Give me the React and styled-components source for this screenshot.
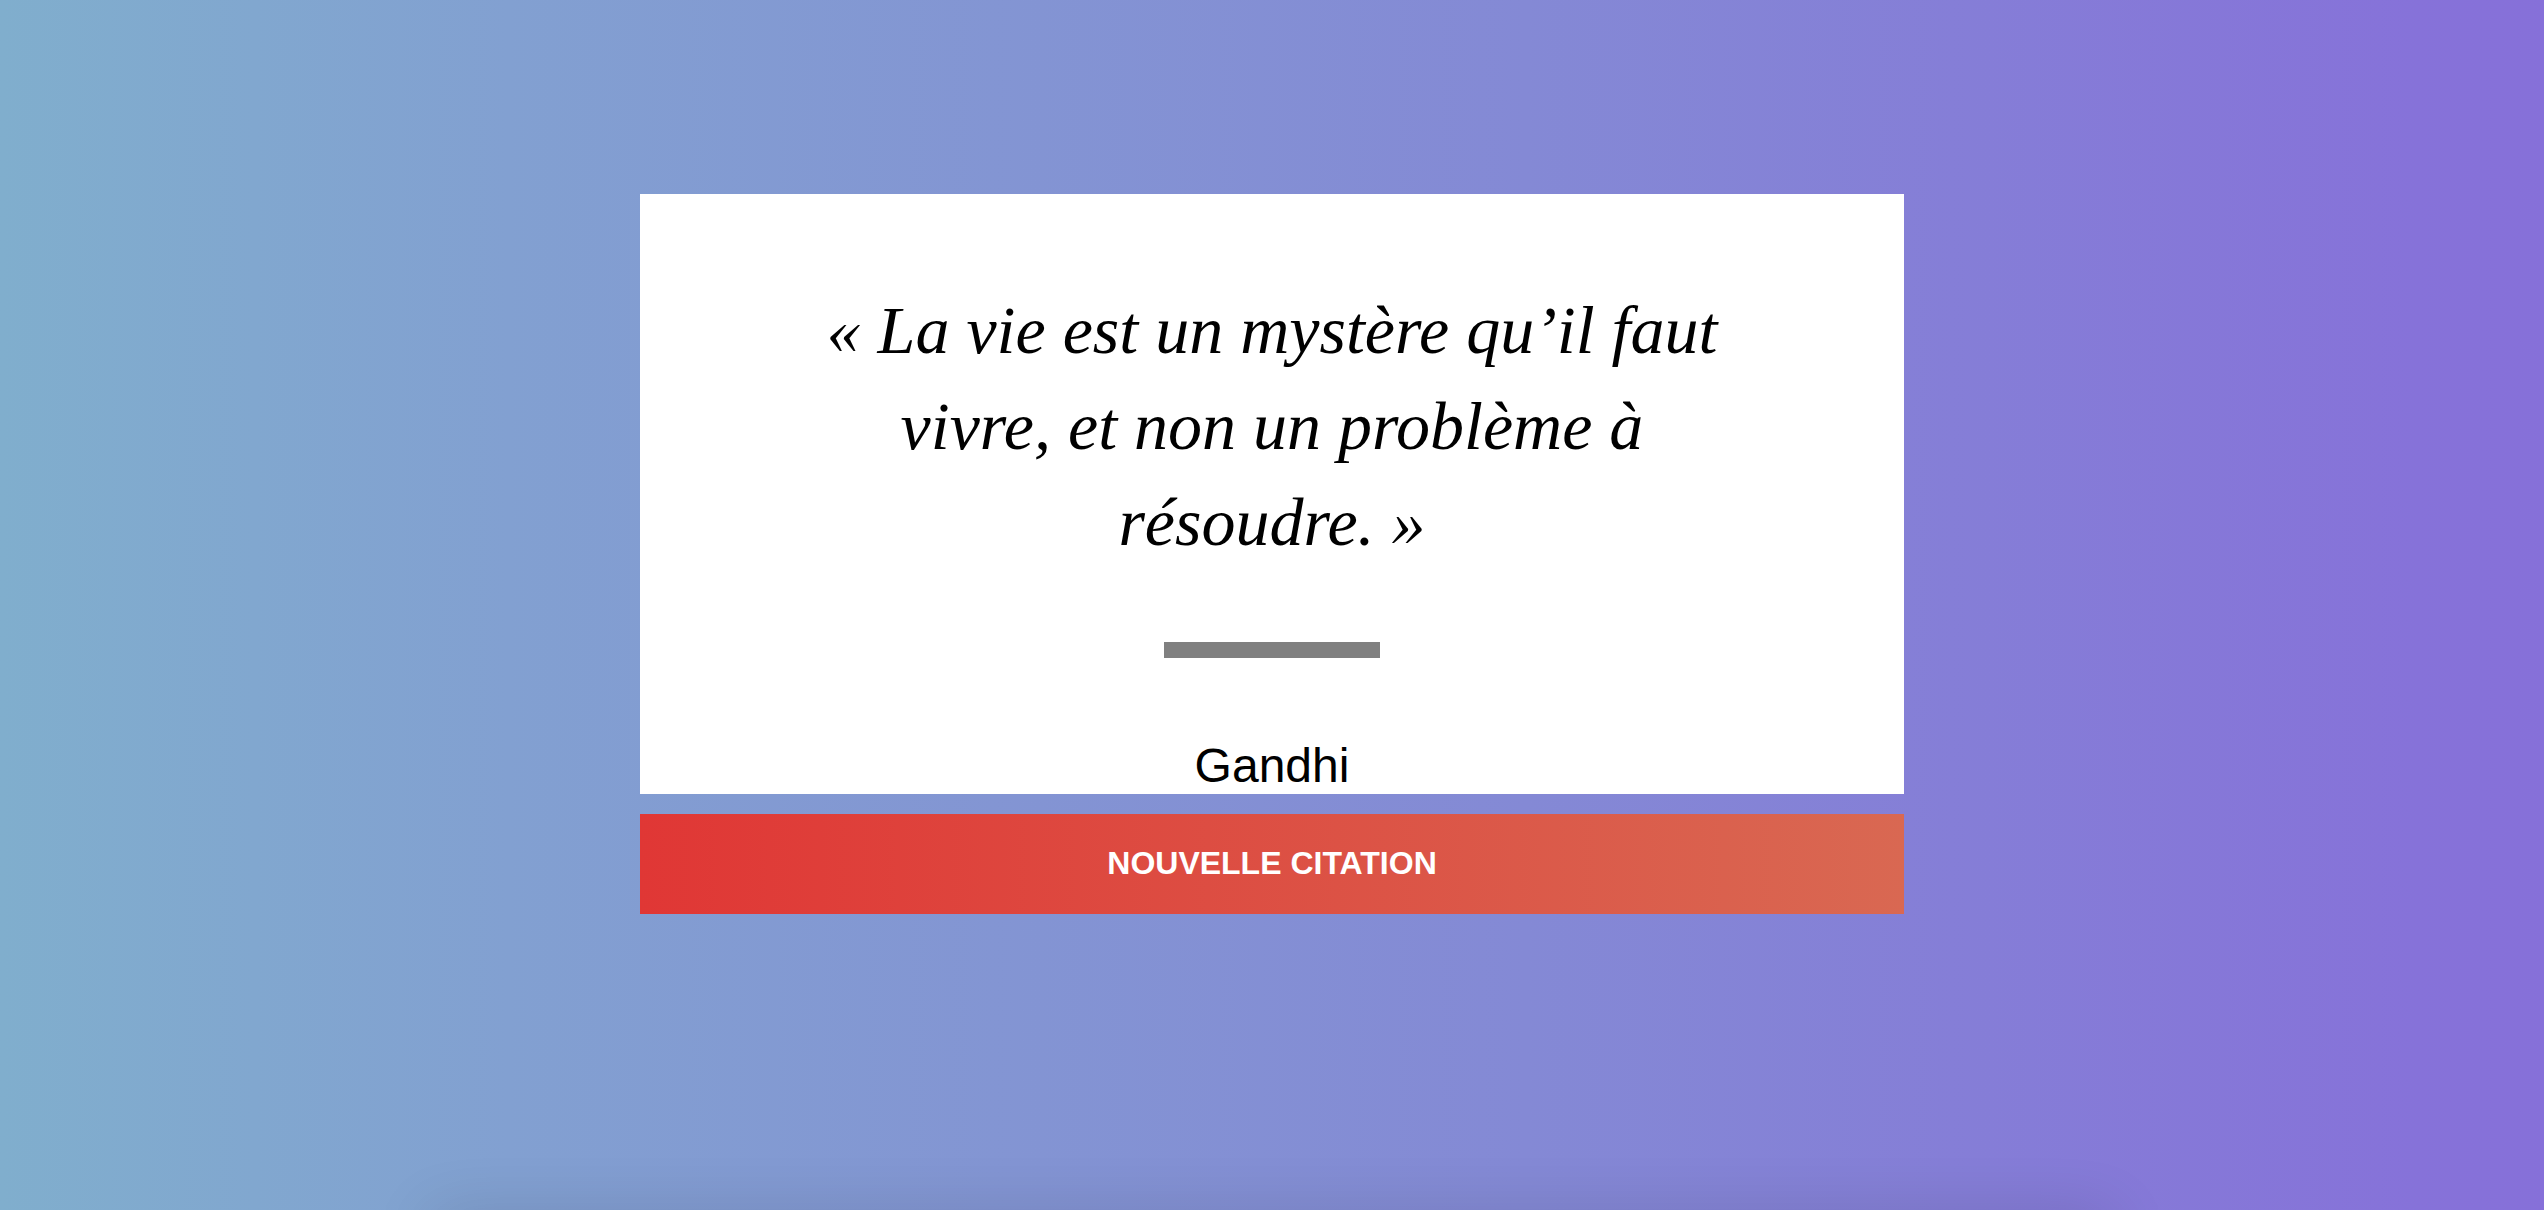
import React from 'react';
import styled, { createGlobalStyle } from 'styled-components';

const GlobalStyle = createGlobalStyle`
  * { box-sizing: border-box; }
  body {
    margin: 0;
    font-family: "Liberation Sans", Arial, sans-serif;
  }
`;

const Page = styled.main`
  position: relative;
  min-height: 100vh;
  padding: 194px 0;
  overflow: hidden;
  background: linear-gradient(to right, #80aecd 0%, #82a0d1 20%, #8489d5 60%, #8672d9 95%, #8670d9 100%);
`;

const Shade = styled.div`
  position: absolute;
  bottom: -40px;
  left: 17%;
  right: 17%;
  height: 30px;
  box-shadow: 0 0 64px rgba(0, 0, 0, 0.2);
`;

const Column = styled.div`
  display: flex;
  flex-direction: column;
  gap: 20px;
  width: 50%;
  max-width: 1264px;
  min-width: 320px;
  margin: 0 auto;
`;

const Card = styled.figure`
  display: flex;
  flex-direction: column;
  align-items: center;
  margin: 0;
  padding: 88px 160px 0;
  background: #fff;
  color: #000;
  text-align: center;
`;

const Quote = styled.blockquote`
  margin: 0;
  font-family: "Lucida Calligraphy", "Apple Chancery", "Liberation Serif", serif;
  font-size: 68px;
  font-style: italic;
  line-height: 96px;
`;

const Rule = styled.hr`
  width: 216px;
  height: 16px;
  margin: 72px 0 80px;
  border: 0;
  background: #808080;
`;

const Author = styled.figcaption`
  font-size: 48px;
  line-height: 56px;
`;

const NewQuote = styled.button`
  height: 100px;
  padding: 0 12px 2px;
  border: 0;
  background: linear-gradient(to right, #e03735, #d96852);
  color: #fff;
  font: bold 32px "Liberation Sans", Arial, sans-serif;
  text-transform: uppercase;
  cursor: pointer;
`;

export default function App() {
  return (
    <Page>
      <GlobalStyle />
      <Column>
        <Card>
          <Quote>« La vie est un mystère qu’il faut<br />vivre, et non un problème à<br />résoudre. »</Quote>
          <Rule />
          <Author>Gandhi</Author>
        </Card>
        <NewQuote type="button">Nouvelle citation</NewQuote>
      </Column>
      <Shade />
    </Page>
  );
}
